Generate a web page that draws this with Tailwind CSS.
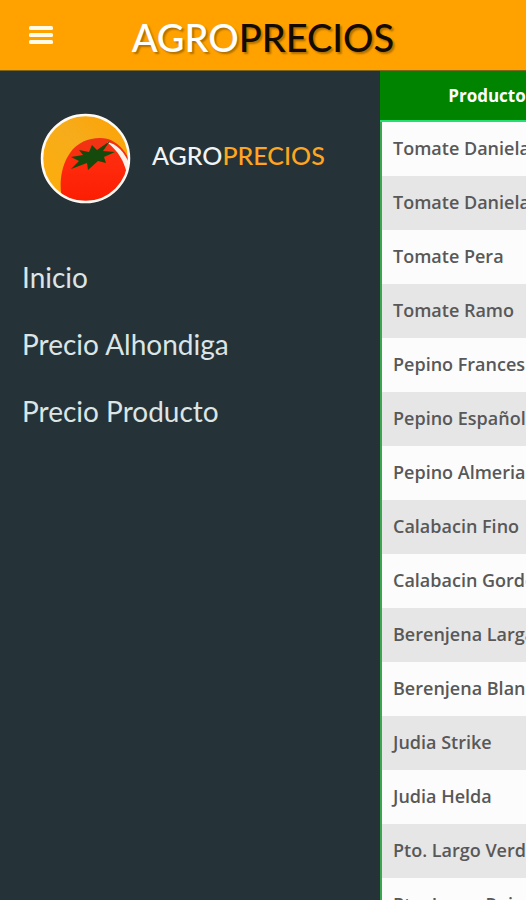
<!DOCTYPE html>
<html lang="es">
<head>
<meta charset="utf-8">
<meta name="viewport" content="width=device-width, initial-scale=1">
<title>AgroPrecios</title>
<script src="https://cdn.jsdelivr.net/npm/@tailwindcss/browser@4"></script>
</head>
<body class="flex h-screen flex-col overflow-hidden bg-[#253238] font-['Lato',sans-serif]">
<header class="relative flex h-[71px] shrink-0 items-center justify-center border-b border-[#7d6522] bg-[#ffa200]">
  <button type="button" aria-label="Abrir menú" class="absolute left-7 top-[22px] text-[#fffbe8]">
    <svg class="h-7 w-7" viewBox="0 0 28 28" fill="currentColor" aria-hidden="true"><rect x="1" y="4" width="24" height="4" rx="1.5"/><rect x="1" y="11" width="24" height="4" rx="1.5"/><rect x="1" y="18" width="24" height="4" rx="1.5"/></svg>
  </button>
  <h1 class="pt-1 text-[38px] font-medium leading-[48px] text-white [text-shadow:2px_2px_2px_#8a5500aa]">AGRO<span class="text-[#130b00]">PRECIOS</span></h1>
</header>
<div class="flex min-h-0 grow">
  <aside class="w-[380px] shrink-0 bg-[#253238]">
    <div class="flex items-center gap-[21px] pl-10 pt-[42px]">
      <svg class="h-[91px] w-[91px]" viewBox="0 0 91 91" role="img" aria-label="Tomate">
        <defs>
          <clipPath id="disc"><circle cx="45.500" cy="45.500" r="43"/></clipPath>
          <linearGradient id="sun" x1="0" y1="1" x2="1" y2="0"><stop offset="0" stop-color="#ffac06"/><stop offset=".55" stop-color="#f6ac1b"/><stop offset="1" stop-color="#ffa000"/></linearGradient>
          <linearGradient id="skin" x1="0" y1="0" x2="0" y2="1"><stop offset="0" stop-color="#ee3514"/><stop offset=".4" stop-color="#ff2a0c"/><stop offset="1" stop-color="#fb1c02"/></linearGradient>
        </defs>
        <g clip-path="url(#disc)">
          <rect width="91" height="91" fill="url(#sun)"/>
          <path d="M24 92C18 76 20 54 30 40C39 27 55 23 68 26C80 30 89 42 92 55V92Z" fill="url(#skin)"/>
          <path d="M67 29C78 31 86 41 90 53L87 61C84 48 79 39 67 29Z" fill="#fff0e8"/>
        </g>
        <path d="M31 44L43 42L39 37L49 39L52 32L57 37L70 28L63 38L75 39L64 44L66 50L58 48L48 57L47 50L31 56L39 48Z" fill="#164a0c"/>
        <circle cx="45.500" cy="45.500" r="43.500" fill="none" stroke="#fffaf3" stroke-width="2.500"/>
      </svg>
      <span class="pb-2 text-[25px] font-medium leading-8 text-[#f1f4f5]">AGRO<span class="text-[#ffa51f]">PRECIOS</span></span>
    </div>
    <nav class="mt-10 text-[28px] leading-[67px] text-[#dce5e5]">
      <a href="#inicio" class="block pl-[22px]">Inicio</a>
      <a href="#alhondiga" class="block pl-[22px]">Precio Alhondiga</a>
      <a href="#producto" class="block pl-[22px]">Precio Producto</a>
    </nav>
  </aside>
  <main class="min-w-0 grow overflow-hidden bg-[#fcfcfc]">
    <table class="w-[214px] border-separate border-spacing-0 whitespace-nowrap text-left font-['Open_Sans',sans-serif] text-[18px] font-semibold text-[#585858]">
      <thead><tr><th class="h-[51px] border-b-2 border-[#25df72] bg-[#008400] p-0 text-center text-[17px] font-bold text-white">Producto</th></tr></thead>
      <tbody class="[&_td]:h-[54px] [&_td]:border-l-2 [&_td]:border-[#38a84c] [&_td]:pt-0 [&_td]:pb-[2px] [&_td]:pr-2 [&_td]:pl-[11px] [&>tr:nth-child(even)]:bg-[#e6e6e6]">
        <tr><td>Tomate Daniela</td></tr>
        <tr><td>Tomate Daniela</td></tr>
        <tr><td>Tomate Pera</td></tr>
        <tr><td>Tomate Ramo</td></tr>
        <tr><td>Pepino Frances</td></tr>
        <tr><td>Pepino Español</td></tr>
        <tr><td>Pepino Almeria</td></tr>
        <tr><td>Calabacin Fino</td></tr>
        <tr><td>Calabacin Gordo</td></tr>
        <tr><td>Berenjena Larga</td></tr>
        <tr><td>Berenjena Blanca</td></tr>
        <tr><td>Judia Strike</td></tr>
        <tr><td>Judia Helda</td></tr>
        <tr><td>Pto. Largo Verde</td></tr>
        <tr><td>Pto. Largo Rojo</td></tr>
      </tbody>
    </table>
  </main>
</div>
</body>
</html>
